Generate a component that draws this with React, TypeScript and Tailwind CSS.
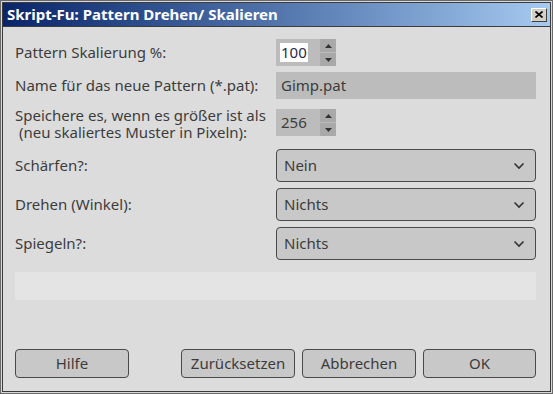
import React from "react";

const font = { fontFamily: '"Noto Sans", "DejaVu Sans", sans-serif' };

function Chevron() {
  return (
    <svg width="12" height="8" viewBox="0 0 12 8" className="shrink-0">
      <path d="M1.5 1.5 L6 6 L10.5 1.5" fill="none" stroke="#333" strokeWidth="1.6" />
    </svg>
  );
}

function Spin({ value, selected }: { value: string; selected?: boolean }) {
  return (
    <div className="flex h-[27px] w-[60px] bg-[#bcbcbc]">
      <div className="flex flex-1 items-center pl-[4px]">
        <span className={selected ? "bg-white px-[1px] leading-[19px] text-[#2a2a4a]" : "px-[1px] text-[#3c3c3c]"}>{value}</span>
      </div>
      <div className="flex w-[16px] flex-col bg-[#a9a9a9]">
        <div className="flex flex-1 items-center justify-center border-b border-[#bcbcbc]">
          <svg width="7" height="4" viewBox="0 0 7 4"><path d="M0 4 L3.5 0 L7 4 Z" fill="#333" /></svg>
        </div>
        <div className="flex flex-1 items-center justify-center">
          <svg width="7" height="4" viewBox="0 0 7 4"><path d="M0 0 L3.5 4 L7 0 Z" fill="#333" /></svg>
        </div>
      </div>
    </div>
  );
}

function Combo({ value }: { value: string }) {
  return (
    <div className="flex h-[33px] w-[260px] items-center justify-between rounded-[4px] border border-[#4a4a4a] bg-[#c8c8c8] pl-[7px] pr-[10px] text-[#3c3c3c]">
      <span>{value}</span>
      <Chevron />
    </div>
  );
}

function Btn({ label, w }: { label: string; w: string }) {
  return (
    <div className={`flex h-[29px] ${w} items-center justify-center rounded-[4px] border border-[#4a4a4a] bg-[#c8c8c8] text-[#3c3c3c]`}>
      {label}
    </div>
  );
}

export default function App() {
  return (
    <div className="h-[394px] w-[553px] bg-[#dcdcdc]" style={font}>
      <div className="flex h-full w-full flex-col border-[1px] border-[#6a6a6a]">
        <div className="flex h-full w-full flex-col border-[1px] border-[#d8d8d8]">
          <div className="flex h-full w-full flex-col border-[1px] border-[#3c3c3c]">
            <div className="flex h-[23px] shrink-0 items-center justify-between bg-gradient-to-r from-[#0a246a] to-[#a6caf0] pl-[4px] pr-[3px]">
              <span className="text-[15px] font-bold text-white">Skript-Fu: Pattern Drehen/ Skalieren</span>
              <div className="flex h-[14px] w-[16px] items-center justify-center border border-t-white border-l-white border-r-[#404040] border-b-[#404040] bg-[#d4d0c8]">
                <svg width="8" height="7" viewBox="0 0 8 7"><path d="M0.5 0.5 L7.5 6.5 M7.5 0.5 L0.5 6.5" stroke="#000" strokeWidth="1.6" /></svg>
              </div>
            </div>
            <div className="h-[1px] shrink-0 bg-[#3c3c3c]" />
            <div className="flex flex-1 flex-col px-[12px] pt-[12px] text-[15px] text-[#3c3c3c]">
              <div className="flex h-[27px] items-center">
                <span className="w-[261px]">Pattern Skalierung %:</span>
                <Spin value="100" selected />
              </div>
              <div className="mt-[6px] flex h-[27px] items-center">
                <span className="w-[261px]">Name für das neue Pattern (*.pat):</span>
                <div className="flex h-[27px] w-[260px] items-center bg-[#bcbcbc] pl-[5px]">Gimp.pat</div>
              </div>
              <div className="mt-[5px] flex h-[37px] items-center">
                <span className="w-[261px] pt-[3px] leading-[17px]">Speichere es, wenn es größer ist als<br />&nbsp;(neu skaliertes Muster in Pixeln):</span>
                <Spin value="256" />
              </div>
              <div className="mt-[8px] flex items-center">
                <span className="w-[261px]">Schärfen?:</span>
                <Combo value="Nein" />
              </div>
              <div className="mt-[6px] flex items-center">
                <span className="w-[261px]">Drehen (Winkel):</span>
                <Combo value="Nichts" />
              </div>
              <div className="mt-[6px] flex items-center">
                <span className="w-[261px]">Spiegeln?:</span>
                <Combo value="Nichts" />
              </div>
              <div className="mt-[12px] h-[28px] w-[521px] bg-[#e4e4e4]" />
              <div className="mt-[49px] flex w-[521px] items-center">
                <Btn label="Hilfe" w="w-[114px]" />
                <div className="flex-1" />
                <div className="flex gap-[7px]">
                  <Btn label="Zurücksetzen" w="w-[114px]" />
                  <Btn label="Abbrechen" w="w-[114px]" />
                  <Btn label="OK" w="w-[113px]" />
                </div>
              </div>
            </div>
          </div>
        </div>
      </div>
    </div>
  );
}
